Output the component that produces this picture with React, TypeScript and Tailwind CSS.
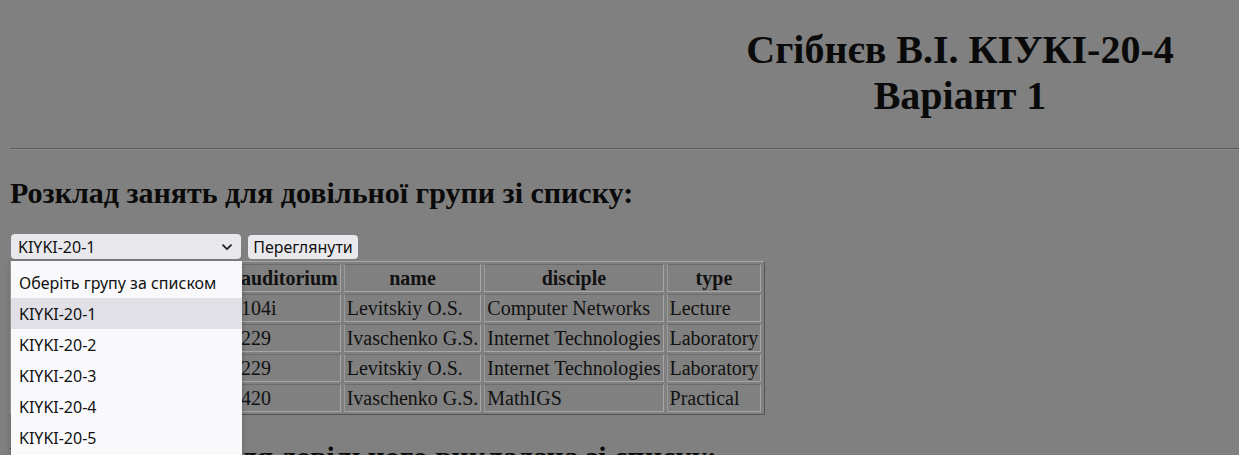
import React from "react";

const rows = [
  ["104i", "Levitskiy O.S.", "Computer Networks", "Lecture"],
  ["229", "Ivaschenko G.S.", "Internet Technologies", "Laboratory"],
  ["229", "Levitskiy O.S.", "Internet Technologies", "Laboratory"],
  ["420", "Ivaschenko G.S.", "MathIGS", "Practical"],
];

const options = [
  "Оберіть групу за списком",
  "KIYKI-20-1",
  "KIYKI-20-2",
  "KIYKI-20-3",
  "KIYKI-20-4",
  "KIYKI-20-5",
  "KIYKI-20-6",
];

const cell =
  "border border-[#a6a6a6] border-t-[#6c6c6c] border-l-[#9a9a9a] px-[2px] py-[1.5px] text-left font-normal whitespace-nowrap";
const head =
  "border border-[#a6a6a6] border-t-[#6c6c6c] border-l-[#9a9a9a] px-[2px] py-[1.5px] text-center font-bold whitespace-nowrap";

export default function App() {
  return (
    <div className="w-[1239px] h-[455px] overflow-hidden bg-[#808080]">
      <div
        className="w-[1920px] px-[10px] pt-[1px] text-black bg-[#808080]"
        style={{ fontFamily: '"Liberation Serif", "Times New Roman", serif' }}
      >
        <h1 className="mt-[26px] mb-[29px] text-center text-[40px] font-bold leading-[46px] text-[#0a0a0a]">
          Сгібнєв В.І. КІУКІ-20-4
          <br />
          Варіант 1
        </h1>
        <div className="h-[2px] border-t border-t-[#5a5a5a] border-b border-b-[#8c8c8c]" />
        <h2 className="mt-[26px] mb-[24px] text-[30px] font-bold leading-[34px] text-[#0a0a0a]">
          Розклад занять для довільної групи зі списку:
        </h2>
        <div className="relative">
          <div
            className="flex items-center gap-[7px] h-[25px]"
            style={{ fontFamily: '"Noto Sans", "Segoe UI", sans-serif' }}
          >
            <div className="ml-[1px] w-[230px] h-[25px] rounded-[4px] bg-[#e9e9ed] flex items-center justify-between pl-[7px] pr-[9px] text-[16px] text-[#111]">
              <span>KIYKI-20-1</span>
              <svg width="10" height="7" viewBox="0 0 10 7" className="mt-[1px]">
                <path d="M1 1.2 L5 5.2 L9 1.2" fill="none" stroke="#222" strokeWidth="1.8" strokeLinecap="round" strokeLinejoin="round" />
              </svg>
            </div>
            <div className="w-[110px] h-[24px] rounded-[4px] bg-[#e9e9ed] flex items-center justify-center text-[16px] text-[#111]">
              Переглянути
            </div>
          </div>
          <div
            className="absolute left-[1px] top-[27px] w-[231px] h-[200px] bg-[#f9f9fb] pt-[6px] shadow-[0_2px_6px_rgba(0,0,0,0.25)] z-10"
            style={{ fontFamily: '"Noto Sans", "Segoe UI", sans-serif' }}
          >
            {options.map((o, i) => (
              <div
                key={o}
                className={
                  "h-[31px] flex items-center pl-[8px] text-[16px] text-[#111] " +
                  (i === 1 ? "bg-[#e0e0e6]" : "")
                }
              >
                {o}
              </div>
            ))}
          </div>
          <table className="mt-[2px] border-separate border-spacing-x-[3px] border-spacing-y-[2px] border border-[#a6a6a6] border-r-[#555] border-b-[#555] text-[20px] leading-[23px] text-[#111]">
            <thead>
              <tr>
                <th className={head + " w-[110px]"}>day</th>
                <th className={head + " w-[108px]"}>pair</th>
                <th className={head}>auditorium</th>
                <th className={head}>name</th>
                <th className={head}>disciple</th>
                <th className={head}>type</th>
              </tr>
            </thead>
            <tbody>
              {rows.map((r, i) => (
                <tr key={i}>
                  <td className={cell}>Monday</td>
                  <td className={cell}>{i + 1}</td>
                  {r.map((c, j) => (
                    <td key={j} className={cell}>
                      {c}
                    </td>
                  ))}
                </tr>
              ))}
            </tbody>
          </table>
          <h2 className="mt-[25px] text-[30px] font-bold leading-[34px] text-[#0a0a0a]">
            Розклад занять для довільного викладача зі списку:
          </h2>
        </div>
      </div>
    </div>
  );
}
